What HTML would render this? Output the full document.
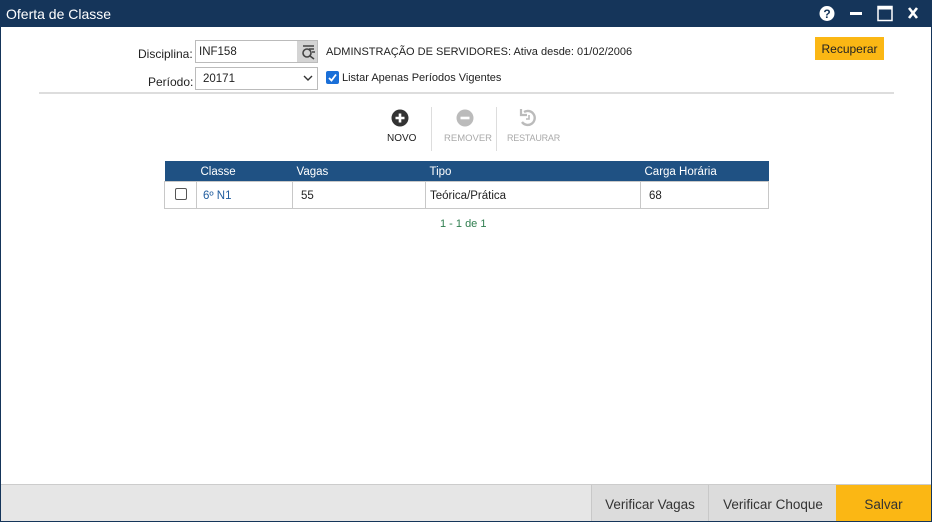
<!DOCTYPE html>
<html><head><meta charset="utf-8"><style>
*{box-sizing:border-box;margin:0;padding:0}
body{width:932px;height:522px;overflow:hidden;font-family:"Liberation Sans",sans-serif;font-size:12px;color:#222;background:#fff;position:relative}
.frame{position:absolute;left:0;top:0;width:932px;height:522px;border:1px solid #15355a}
.title{position:absolute;left:0;top:0;width:932px;height:27px;background:#15355a;color:#fff;font-size:14px;padding:6px 0 0 6px}
.abs{position:absolute}
.inp{position:absolute;border:1px solid #bbb;background:#fff;height:23px;font-size:11.5px;padding:5px 3px 0}
.footer{position:absolute;left:1px;top:484px;width:930px;height:37px;background:#e6e6e6;border-top:1px solid #ccc}
.fb{position:absolute;top:0;height:36px;background:#dcdcdc;border-left:1px solid #c8c8c8;font-size:13.5px;color:#333;text-align:center;line-height:40px}
table{position:absolute;left:164px;top:161px;width:605px;border-collapse:collapse;font-size:11.5px}
th{background:#1f5183;color:#fff;font-weight:normal;text-align:left;height:20px;padding:3px 0 0 4px}
td{height:27px;border:1px solid #c8c8c8;padding:2px 0 0 8px}
</style></head><body>
<div class="frame"></div>
<div class="title">Oferta de Classe</div>
<svg class="abs" style="left:819px;top:5px" width="100" height="18">
<circle cx="8" cy="8.5" r="7.5" fill="#fff"/><text x="8" y="13" font-size="12" font-weight="bold" text-anchor="middle" fill="#15355a" font-family="Liberation Sans">?</text>
<rect x="31" y="7" width="12" height="3" fill="#fff"/>
<rect x="59" y="1.5" width="14" height="14" fill="none" stroke="#fff" stroke-width="1.5"/><rect x="59" y="1.5" width="14" height="3" fill="#fff"/>
<path d="M90 3 L98 13 M98 3 L90 13" stroke="#fff" stroke-width="2.6"/>
</svg>
<div class="abs" style="left:138px;top:47px;font-size:12px">Disciplina:</div>
<div class="inp" style="left:195px;top:40px;width:123px">INF158</div>
<div class="abs" style="left:297px;top:41px;width:20px;height:21px;background:#d4d4d4"></div>
<svg class="abs" style="left:300px;top:44px" width="16" height="16"><circle cx="7" cy="9" r="4" fill="none" stroke="#444" stroke-width="1.6"/><path d="M3 2h11M9 5h5M12 8h3M10 12l4 3" stroke="#444" stroke-width="1.6"/></svg>
<div class="abs" style="left:326px;top:46px;font-size:11px">ADMINSTRAÇÃO DE SERVIDORES: Ativa desde: 01/02/2006</div>
<div class="abs" style="left:815px;top:37px;width:69px;height:23px;background:#fbb714;font-size:12px;text-align:center;line-height:24px">Recuperar</div>
<div class="abs" style="left:148px;top:75px">Período:</div>
<div class="inp" style="left:195px;top:67px;width:123px;padding-left:7px">20171</div>
<svg class="abs" style="left:303px;top:75px" width="10" height="7"><path d="M1 1l4 4 4-4" fill="none" stroke="#333" stroke-width="1.4"/></svg>
<div class="abs" style="left:326px;top:71px;width:13px;height:13px;background:#1a6fd8;border-radius:2px"></div>
<svg class="abs" style="left:326px;top:71px" width="13" height="13"><path d="M3 7l2.5 2.5L10 3.5" fill="none" stroke="#fff" stroke-width="1.8"/></svg>
<div class="abs" style="left:342px;top:72px;font-size:11px">Listar Apenas Períodos Vigentes</div>
<div class="abs" style="left:39px;top:92px;width:855px;height:2px;background:#ddd"></div>
<svg class="abs" style="left:390px;top:108px" width="180" height="20">
<circle cx="10" cy="10" r="8.5" fill="#333"/><path d="M10 5.5v9M5.5 10h9" stroke="#fff" stroke-width="2.6"/>
<circle cx="75" cy="10" r="8.5" fill="#bbb"/><path d="M70.5 10h9" stroke="#fff" stroke-width="2.6"/>
<path d="M134 4 A7 7 0 1 1 132 14" fill="none" stroke="#bbb" stroke-width="2.4"/><path d="M131 1v6h6" fill="none" stroke="#bbb" stroke-width="2.2"/><path d="M139 7v4h-3" fill="none" stroke="#bbb" stroke-width="1.6"/>
</svg>
<div class="abs" style="left:431px;top:107px;width:1px;height:44px;background:#ddd"></div>
<div class="abs" style="left:496px;top:107px;width:1px;height:44px;background:#ddd"></div>
<div class="abs" style="left:387px;top:133px;font-size:10px;color:#222">NOVO</div>
<div class="abs" style="left:444px;top:133px;font-size:9.5px;color:#aaa">REMOVER</div>
<div class="abs" style="left:507px;top:133px;font-size:9px;color:#aaa;letter-spacing:-0.2px">RESTAURAR</div>
<table>
<tr><th style="width:32px"></th><th style="width:96px">Classe</th><th style="width:133px">Vagas</th><th style="width:215px">Tipo</th><th>Carga Horária</th></tr>
<tr><td style="padding:0;text-align:center"><span style="display:inline-block;width:12px;height:12px;border:1.5px solid #555;border-radius:2px;vertical-align:middle"></span></td><td style="color:#1f5c9e;padding-left:6px">6º N1</td><td>55</td><td style="padding-left:4px">Teórica/Prática</td><td>68</td></tr>
</table>
<div class="abs" style="left:440px;top:218px;font-size:11px;color:#2e7d4e">1 - 1 de 1</div>
<div class="footer">
<div class="fb" style="left:590px;width:117px">Verificar Vagas</div>
<div class="fb" style="left:707px;width:129px">Verificar Choque</div>
<div class="fb" style="left:835px;width:95px;background:#fbb714;border-left:none">Salvar</div>
</div>
</body></html>
